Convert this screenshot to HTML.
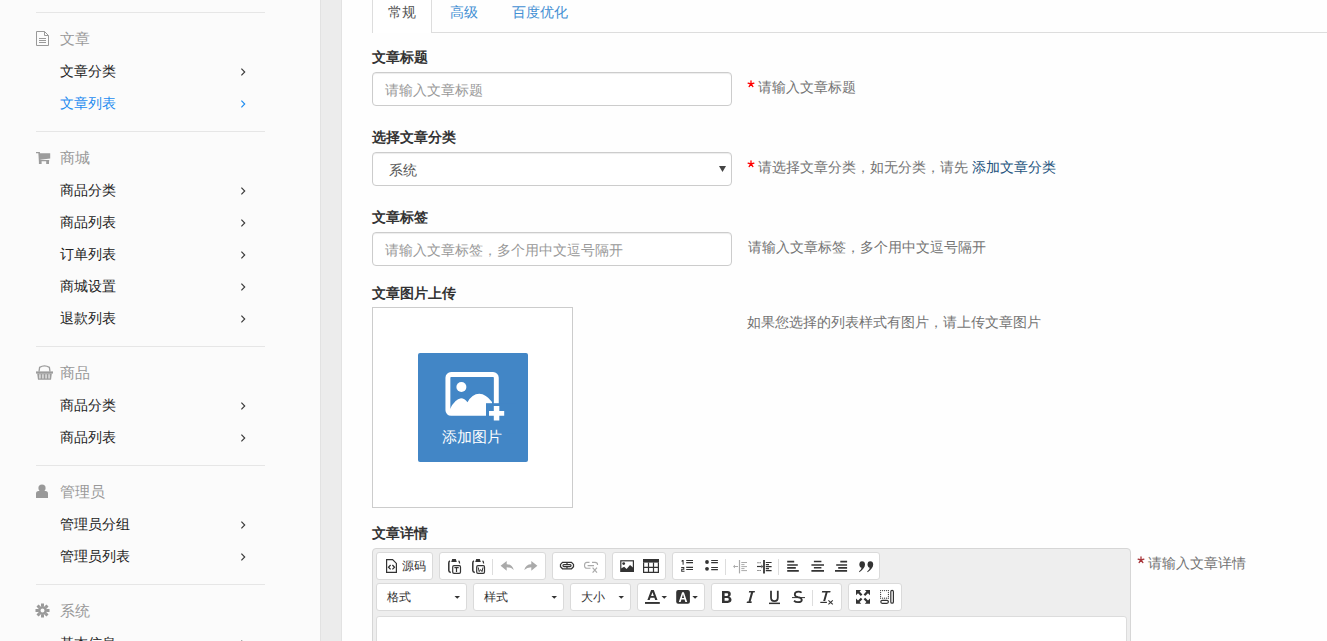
<!DOCTYPE html>
<html><head><meta charset="utf-8">
<style>
html,body{margin:0;padding:0;}
body{width:1327px;height:641px;overflow:hidden;position:relative;background:#fdfdfd;font-family:"Liberation Sans",sans-serif;color:#333;}
.a{position:absolute;white-space:nowrap;}
#side{position:absolute;left:0;top:0;width:320px;height:641px;background:#fbfbfb;}
#strip{position:absolute;left:320px;top:0;width:22px;height:641px;background:#ececec;}
#strip:before{content:"";position:absolute;left:0;top:0;width:1px;height:641px;background:#e2e2e2;}
#strip:after{content:"";position:absolute;right:0;top:0;width:1px;height:641px;background:#e2e2e2;}
.sl{position:absolute;left:36px;width:229px;height:1px;background:#e6e6e6;}
.sh{position:absolute;left:60px;font-size:15px;line-height:20px;color:#999;white-space:nowrap;}
.si{position:absolute;left:60px;font-size:14px;line-height:20px;color:#222;white-space:nowrap;}
.si.act{color:#1e8cf0;}
.ic{position:absolute;}
#content{position:absolute;left:342px;top:0;width:985px;height:641px;background:#fefefe;}
.lbl{position:absolute;left:372px;font-size:14px;line-height:20px;font-weight:bold;color:#333;white-space:nowrap;}
.inp{position:absolute;left:372px;width:358px;height:32px;border:1px solid #ccc;border-radius:4px;background:#fff;box-shadow:inset 0 1px 1px rgba(0,0,0,.075);}
.ph{position:absolute;font-size:14px;line-height:20px;color:#999;white-space:nowrap;}
.help{position:absolute;font-size:14px;line-height:20px;color:#737373;white-space:nowrap;}
.star{color:#f00;}
.tg{position:absolute;height:26px;border:1px solid #dadada;border-radius:3px;background:#fff;}

</style></head><body>
<div id="side">

  <div class="sl" style="top:12px"></div>
  <svg class="ic" style="left:36px;top:31px" width="13" height="15" viewBox="0 0 13 15"><path d="M0.5 0.5H8.5L12.5 4.5V14.5H0.5Z" fill="none" stroke="#999"/><path d="M8.5 0.5V4.5H12.5" fill="none" stroke="#999"/><path d="M3 7.5H10M3 9.5H10M3 11.5H10" stroke="#999"/></svg>
  <div class="sh" style="top:29px">文章</div>
  <div class="si" style="top:61px">文章分类</div>
  <div class="si act" style="top:93px">文章列表</div>
  <div class="sl" style="top:131px"></div>
  <svg class="ic" style="left:0;top:140px" width="60" height="30" viewBox="0 140 60 30"><path d="M36 152.1H39.6V153.3H36Z M38.3 152.1H39.9L40.5 162H38.9Z M39.6 153.3H50.2V158.4L40.2 159.7Z M39.6 160.1H49.2V161.3H39.6Z M38.9 161.2H41.6V164H38.9Z M46.2 161.2H49V164H46.2Z" fill="#9c9c9c"/></svg>
  <div class="sh" style="top:148px">商城</div>
  <div class="si" style="top:180px">商品分类</div>
  <div class="si" style="top:212px">商品列表</div>
  <div class="si" style="top:244px">订单列表</div>
  <div class="si" style="top:276px">商城设置</div>
  <div class="si" style="top:308px">退款列表</div>
  <div class="sl" style="top:346px"></div>
  <svg class="ic" style="left:36px;top:365px" width="17" height="15" viewBox="0 0 17 15"><path d="M3 6.6L3.6 2.4Q8.5 -0.6 13.4 2.4L14 6.6" fill="none" stroke="#9c9c9c" stroke-width="1.3"/><path d="M0 6.4H17V8.6H0Z" fill="#9c9c9c"/><path d="M1.2 8.6H15.8L15 14.8H2Z" fill="#9c9c9c"/><path d="M3.4 9.3H4.5V13.6H3.4Z M6.4 9.3H7.5V13.6H6.4Z M9.5 9.3H10.6V13.6H9.5Z M12.5 9.3H13.6V13.6H12.5Z" fill="#fbfbfb"/></svg>
  <div class="sh" style="top:363px">商品</div>
  <div class="si" style="top:395px">商品分类</div>
  <div class="si" style="top:427px">商品列表</div>
  <div class="sl" style="top:465px"></div>
  <svg class="ic" style="left:36px;top:484px" width="13" height="14" viewBox="0 0 13 14"><circle cx="6" cy="4" r="3.6" fill="#999"/><path d="M0 14V9.5Q0 7 2.5 7H9.5Q12 7 12 9.5V14Z" fill="#999"/></svg>
  <div class="sh" style="top:482px">管理员</div>
  <div class="si" style="top:514px">管理员分组</div>
  <div class="si" style="top:546px">管理员列表</div>
  <div class="sl" style="top:584px"></div>
  <svg class="ic" style="left:35px;top:603px" width="15" height="15" viewBox="0 0 15 15"><g fill="#999"><path d="M6 0.5H9V3H6Z M6 12H9V14.5H6Z M0.5 6H3V9H0.5Z M12 6H14.5V9H12Z"/><path d="M6 0.5H9V3H6Z" transform="rotate(45 7.5 7.5)"/><path d="M6 0.5H9V3H6Z" transform="rotate(135 7.5 7.5)"/><path d="M6 0.5H9V3H6Z" transform="rotate(225 7.5 7.5)"/><path d="M6 0.5H9V3H6Z" transform="rotate(315 7.5 7.5)"/></g><circle cx="7.5" cy="7.5" r="3.3" fill="none" stroke="#999" stroke-width="2.6"/></svg>
  <div class="sh" style="top:601px">系统</div>
  <div class="si" style="top:633px">基本信息</div>

<svg class="a" style="left:238px;top:66.4px" width="10" height="12" viewBox="238 66.4 10 12"><path d="M241.4 69.10000000000001L244.7 72.4L241.4 75.7" fill="none" stroke="#3a3a3a" stroke-width="1.15"/></svg><svg class="a" style="left:238px;top:98.4px" width="10" height="12" viewBox="238 98.4 10 12"><path d="M241.4 101.10000000000001L244.7 104.4L241.4 107.7" fill="none" stroke="#1e8cf0" stroke-width="1.15"/></svg><svg class="a" style="left:238px;top:185.4px" width="10" height="12" viewBox="238 185.4 10 12"><path d="M241.4 188.1L244.7 191.4L241.4 194.70000000000002" fill="none" stroke="#3a3a3a" stroke-width="1.15"/></svg><svg class="a" style="left:238px;top:217.4px" width="10" height="12" viewBox="238 217.4 10 12"><path d="M241.4 220.1L244.7 223.4L241.4 226.70000000000002" fill="none" stroke="#3a3a3a" stroke-width="1.15"/></svg><svg class="a" style="left:238px;top:249.4px" width="10" height="12" viewBox="238 249.4 10 12"><path d="M241.4 252.1L244.7 255.4L241.4 258.7" fill="none" stroke="#3a3a3a" stroke-width="1.15"/></svg><svg class="a" style="left:238px;top:281.4px" width="10" height="12" viewBox="238 281.4 10 12"><path d="M241.4 284.09999999999997L244.7 287.4L241.4 290.7" fill="none" stroke="#3a3a3a" stroke-width="1.15"/></svg><svg class="a" style="left:238px;top:313.4px" width="10" height="12" viewBox="238 313.4 10 12"><path d="M241.4 316.09999999999997L244.7 319.4L241.4 322.7" fill="none" stroke="#3a3a3a" stroke-width="1.15"/></svg><svg class="a" style="left:238px;top:400.4px" width="10" height="12" viewBox="238 400.4 10 12"><path d="M241.4 403.09999999999997L244.7 406.4L241.4 409.7" fill="none" stroke="#3a3a3a" stroke-width="1.15"/></svg><svg class="a" style="left:238px;top:432.4px" width="10" height="12" viewBox="238 432.4 10 12"><path d="M241.4 435.09999999999997L244.7 438.4L241.4 441.7" fill="none" stroke="#3a3a3a" stroke-width="1.15"/></svg><svg class="a" style="left:238px;top:519.4px" width="10" height="12" viewBox="238 519.4 10 12"><path d="M241.4 522.1L244.7 525.4L241.4 528.6999999999999" fill="none" stroke="#3a3a3a" stroke-width="1.15"/></svg><svg class="a" style="left:238px;top:551.4px" width="10" height="12" viewBox="238 551.4 10 12"><path d="M241.4 554.1L244.7 557.4L241.4 560.6999999999999" fill="none" stroke="#3a3a3a" stroke-width="1.15"/></svg><svg class="a" style="left:238px;top:638.4px" width="10" height="12" viewBox="238 638.4 10 12"><path d="M241.4 641.1L244.7 644.4L241.4 647.6999999999999" fill="none" stroke="#3a3a3a" stroke-width="1.15"/></svg>
</div>
<div id="strip"></div>
<div id="content"></div>
<!-- tabs -->
<div class="a" style="left:372px;top:-10px;width:58px;height:42px;border:1px solid #ddd;border-bottom:0;border-radius:4px 4px 0 0;background:#fff;"></div>
<div class="a" style="left:431px;top:32px;width:896px;height:1px;background:#ddd;"></div>
<div class="a" style="left:388px;top:2px;font-size:14px;line-height:20px;color:#555;">常规</div>
<div class="a" style="left:450px;top:2px;font-size:14px;line-height:20px;color:#428fd3;">高级</div>
<div class="a" style="left:512px;top:2px;font-size:14px;line-height:20px;color:#428fd3;">百度优化</div>
<!-- group1 -->
<div class="lbl" style="top:47px">文章标题</div>
<div class="inp" style="top:72px"></div>
<div class="ph" style="left:385px;top:80px">请输入文章标题</div>
<svg class="a" style="left:745.6px;top:79.2px" width="10" height="10" viewBox="745.6 79.2 10 10"><path d="M750.6 84.2V81.0M750.6 84.2L747.7 83.4M750.6 84.2L753.5 83.4M750.6 84.2L748.7 86.8M750.6 84.2L752.5 86.8" stroke="#f00" stroke-width="1.3" stroke-linecap="round" fill="none"/></svg><div class="help" style="left:758px;top:77px">请输入文章标题</div>
<!-- group2 -->
<div class="lbl" style="top:127px">选择文章分类</div>
<div class="inp" style="top:152px"></div>
<div class="a" style="left:389px;top:160px;font-size:14px;line-height:20px;color:#555;">系统</div>
<svg class="a" style="left:719px;top:166px" width="7" height="6" viewBox="0 0 7 6"><path d="M0 0H7L3.5 6Z" fill="#444"/></svg>
<svg class="a" style="left:745.6px;top:159.2px" width="10" height="10" viewBox="745.6 159.2 10 10"><path d="M750.6 164.2V161.0M750.6 164.2L747.7 163.39999999999998M750.6 164.2L753.5 163.39999999999998M750.6 164.2L748.7 166.79999999999998M750.6 164.2L752.5 166.79999999999998" stroke="#f00" stroke-width="1.3" stroke-linecap="round" fill="none"/></svg><div class="help" style="left:758px;top:157px">请选择文章分类，如无分类，请先 <span style="color:#23527c">添加文章分类</span></div>
<!-- group3 -->
<div class="lbl" style="top:207px">文章标签</div>
<div class="inp" style="top:232px"></div>
<div class="ph" style="left:385px;top:240px">请输入文章标签，多个用中文逗号隔开</div>
<div class="help" style="left:748px;top:237px">请输入文章标签，多个用中文逗号隔开</div>
<!-- group4 -->
<div class="lbl" style="top:283px">文章图片上传</div>
<div class="a" style="left:372px;top:307px;width:199px;height:199px;border:1px solid #ccc;background:#fff;"></div>
<div class="a" style="left:418px;top:353px;width:110px;height:109px;background:#4286c6;border-radius:2px;"></div>
<svg class="a" style="left:418px;top:353px" width="110" height="109" viewBox="418 353 110 109">
  <rect x="447.9" y="374.5" width="48.4" height="38.9" rx="3.2" fill="none" stroke="#fff" stroke-width="4.9"/>
  <circle cx="461.4" cy="387" r="5" fill="#fff"/>
  <path d="M450 409Q455 399 461 398.3Q464.5 398.5 467.5 402.3Q472 394 479.3 393.8Q486 394 492 402V413H450Z" fill="#fff"/>
  <rect x="486" y="403.2" width="30" height="30" fill="#4286c6"/>
  <path d="M493.8 406H499.3V411H504.2V415.8H499.3V420.6H493.8V415.8H489V411H493.8Z" fill="#fff"/>
</svg>
<div class="a" style="left:442px;top:427px;font-size:15px;line-height:20px;color:#fff;">添加图片</div>
<div class="help" style="left:747px;top:312px">如果您选择的列表样式有图片，请上传文章图片</div>
<!-- group5 -->
<div class="lbl" style="top:523px">文章详情</div>
<svg class="a" style="left:1136px;top:555.2px" width="10" height="10" viewBox="1136 555.2 10 10"><path d="M1141 560.2V557.0M1141 560.2L1138.1 559.4000000000001M1141 560.2L1143.9 559.4000000000001M1141 560.2L1139.1 562.8000000000001M1141 560.2L1142.9 562.8000000000001" stroke="#a8353a" stroke-width="1.3" stroke-linecap="round" fill="none"/></svg><div class="help" style="left:1148px;top:553px">请输入文章详情</div>

<div class="a" style="left:372px;top:548px;width:757px;height:110px;border:1px solid #d6d6d6;border-radius:4px;background:#eeeeee;"></div>
<div class="a" style="left:376px;top:616px;width:749px;height:40px;border:1px solid #dcdcdc;border-radius:3px 3px 0 0;background:#fff;"></div>
<!-- row1 groups -->
<div class="tg" style="left:376px;top:552px;width:55px;"></div>
<div class="tg" style="left:439px;top:552px;width:105px;"></div>
<div class="tg" style="left:552px;top:552px;width:52px;"></div>
<div class="tg" style="left:612px;top:552px;width:52px;"></div>
<div class="tg" style="left:672px;top:552px;width:206px;"></div>
<!-- row2 -->
<div class="tg" style="left:376px;top:583px;width:89px;"></div>
<div class="tg" style="left:473px;top:583px;width:89px;"></div>
<div class="tg" style="left:570px;top:583px;width:59px;"></div>
<div class="tg" style="left:637px;top:583px;width:66px;"></div>
<div class="tg" style="left:711px;top:583px;width:129px;"></div>
<div class="tg" style="left:848px;top:583px;width:52px;"></div>
<div class="a" style="left:402px;top:558px;font-size:12px;line-height:16px;color:#333;">源码</div>
<div class="a" style="left:387px;top:589px;font-size:12px;line-height:16px;color:#333;">格式</div>
<div class="a" style="left:484px;top:589px;font-size:12px;line-height:16px;color:#333;">样式</div>
<div class="a" style="left:581px;top:589px;font-size:12px;line-height:16px;color:#333;">大小</div>
<svg class="a" style="left:0;top:0" width="1327" height="641" viewBox="0 0 1327 641">
 <g fill="none" stroke="#333" stroke-width="1.2">
  <!-- source doc -->
  <path d="M386.6 559.6H392.6L396.4 563.4V572.4H386.6Z"/>
  <path d="M390.6 565L388.5 567.2L390.6 569.4M392.4 565L394.5 567.2L392.4 569.4" stroke-width="1.3"/>
  <!-- paste text -->
  <path d="M450 560.8Q448.8 561.4 448.8 563V570.6Q448.8 572.2 450.8 572.6" stroke-width="1.5"/>
  <path d="M458.6 560.8Q459.6 561.6 459.6 563.6"/>
  <rect x="452.7" y="565.6" width="7.8" height="7.8" rx="1.3"/>
  <path d="M454.4 567.6H458.7M456.5 567.6V572"/>
  <!-- paste word -->
  <path d="M474 560.8Q472.8 561.4 472.8 563V570.6Q472.8 572.2 474.8 572.6" stroke-width="1.5"/>
  <path d="M482.6 560.8Q483.6 561.6 483.6 563.6"/>
  <rect x="476.7" y="565.6" width="7.8" height="7.8" rx="1.3"/>
  <path d="M478.2 567.4L479.2 571.6L480.6 569.6L482 571.6L483 567.4" stroke-width="1"/>
  <!-- link -->
  <path d="M562.5 562.4H571.5L573.5 564.4V566.8L571.5 568.8H562.5L560.5 566.8V564.4Z" stroke-width="1.25"/>
  <rect x="562.9" y="564.6" width="8.2" height="2" rx="1" stroke-width="1.1"/>
  <path d="M567 562.6V564.2M567 567V568.6" stroke-width="1.2"/>
  <!-- image -->
  <rect x="620.8" y="560.8" width="12.6" height="10.6"/>
  <!-- table -->
  <path d="M643.6 562.4V572.3H658.4V562.4M648.5 562.4V572.3M653.5 562.4V572.3M643.6 567.3H658.4"/>
  <!-- lists -->
  <path d="M686.2 560.5H693M686.2 562.6H693M686.2 567.4H693M686.2 569.5H693" stroke-width="1.15"/>
  <path d="M711.2 560.5H717.9M711.2 562.6H717.9M711.2 567.5H717.9M711.2 569.6H717.9" stroke-width="1.15"/>
  <!-- indent -->
  <path d="M764 560V573.4" stroke-width="1.8"/>
  <path d="M765.8 562.5H771.6M765.8 564.6H769M765.8 566.6H771.6M765.8 568.6H769M765.8 570.6H771.6" stroke-width="1.1"/>
  <path d="M757 566.5H761.5" stroke-width="1.2"/>
  <!-- align -->
  <path d="M787.2 561.6H794.2M787.2 565H797.8M787.2 567.9H795.8M787.2 570.9H798.8" stroke-width="1.6"/>
  <path d="M813.9 561.5H821.4M811.4 565H824M813.9 567.8H821.4M811.4 570.9H824" stroke-width="1.6"/>
  <path d="M840.3 561.6H847.1M836.2 565H847.1M838.2 567.9H847.1M835 570.9H847.1" stroke-width="1.6"/>
  <!-- showblocks -->
  <rect x="880.8" y="600.3" width="7.6" height="3" rx="1.5"/>
  <rect x="890.8" y="590.4" width="2.6" height="12.8" rx="1.3"/>
 </g>
 <g fill="#333">
  <path d="M761.5 564.6L763 566.5L761.5 568.4Z"/>
  <path d="M757.5 562.3h1v0.9h-1zM759.6 562.3h1v0.9h-1zM757.5 570.1h1v0.9h-1zM759.6 570.1h1v0.9h-1z"/>
  <circle cx="623.7" cy="563.6" r="1.4"/>
  <path d="M451.2 562L452.2 558.9H455.8L456.8 562Z"/>
  <path d="M475.2 562L476.2 558.9H479.8L480.8 562Z"/>
  <path d="M621 571V568.6L624.2 566.8L626.6 569L630 565L633 567.4V571Z"/>
  <rect x="643" y="559" width="16" height="3.6"/>
  <path d="M681.8 560H683.6V564.8H682.6V561.5L681.6 561.9Z M681.2 567H684.3V569.7H682.2V570.8H684.5V571.8H681.2V568.8H683.3V568H681.2Z"/>
  <circle cx="707" cy="562" r="1.9"/><circle cx="707" cy="568.8" r="1.9"/>
  <!-- blockquote -->
  <path d="M862 561.2Q865 561.2 865 564.6Q865 568.5 859.4 572.2L859 571.6Q861.5 569.6 861.6 567.8Q859.5 567.6 859.3 564.6Q859.4 561.2 862 561.2Z"/>
  <path d="M870.2 561.2Q873.2 561.2 873.2 564.6Q873.2 568.5 867.6 572.2L867.2 571.6Q869.7 569.6 869.8 567.8Q867.7 567.6 867.5 564.6Q867.6 561.2 870.2 561.2Z"/>
  <!-- font color -->
  <path d="M651.1 590H653.8L657.5 600H655.2L654.4 597.7H650.5L649.7 600H647.4Z M651.1 595.9H653.8L652.45 592.3Z" fill-rule="evenodd"/>
  <rect x="645" y="602" width="14.8" height="1.9"/>
  <path d="M661.5 596H667L664.25 598.8Z"/>
  <rect x="676.2" y="590.1" width="13.7" height="13.7" rx="2"/>
  <path d="M692.3 596H697.9L695.1 598.8Z"/>
  <!-- B -->
  <path d="M722 591.1H727.4Q730.8 591.1 730.8 594Q730.8 596 729.2 596.7Q731.5 597.4 731.5 599.6Q731.5 602.9 727.8 602.9H722Z M724.6 593.2V595.9H727Q728.2 595.9 728.2 594.5Q728.2 593.2 727 593.2Z M724.6 597.9V600.8H727.3Q728.8 600.8 728.8 599.3Q728.8 597.9 727.3 597.9Z" fill-rule="evenodd"/>
  <!-- I -->
  <path d="M749.2 591H755L754.6 592.4H753.2L750.6 601.5H751.9L751.5 603H746.6L747 601.5H748.5L751 592.4H748.8Z"/>
  <!-- U underline -->
  <rect x="769" y="602.6" width="11" height="1.5"/>
  <!-- Tx -->
  <path d="M822.2 591H830.6L830.2 592.6H827.6L825.2 601H823.2L825.6 592.6H821.8Z"/>
  <rect x="820.3" y="601.8" width="6.6" height="1.2"/>
  <!-- maximize -->
  <path d="M856 590H861.2L859.6 591.6L862.4 594.4L860.8 596L858 593.2L856 595.2Z"/>
  <path d="M870 590H864.8L866.4 591.6L863.6 594.4L865.2 596L868 593.2L870 595.2Z"/>
  <path d="M856 603.7H861.2L859.6 602.1L862.4 599.3L860.8 597.7L858 600.5L856 598.5Z"/>
  <path d="M870 603.7H864.8L866.4 602.1L863.6 599.3L865.2 597.7L868 600.5L870 598.5Z"/>
  <!-- dots -->
  <g>
   <circle cx="880.6" cy="590.6" r="0.6"/><circle cx="882.6" cy="590.6" r="0.6"/><circle cx="884.6" cy="590.6" r="0.6"/><circle cx="886.6" cy="590.6" r="0.6"/><circle cx="888.4" cy="590.6" r="0.6"/>
   <circle cx="880.6" cy="598.2" r="0.6"/><circle cx="882.6" cy="598.2" r="0.6"/><circle cx="884.6" cy="598.2" r="0.6"/><circle cx="886.6" cy="598.2" r="0.6"/><circle cx="888.4" cy="598.2" r="0.6"/>
   <circle cx="880.6" cy="592.5" r="0.6"/><circle cx="880.6" cy="594.4" r="0.6"/><circle cx="880.6" cy="596.3" r="0.6"/>
   <circle cx="888.4" cy="592.5" r="0.6"/><circle cx="888.4" cy="594.4" r="0.6"/><circle cx="888.4" cy="596.3" r="0.6"/>
  </g>
  <!-- combo arrows -->
  <path d="M454.5 596H460L457.25 598.8Z"/>
  <path d="M551.5 596H557L554.25 598.8Z"/>
  <path d="M618.5 596H624L621.25 598.8Z"/>
 </g>
 <g fill="none" stroke="#333">
  <!-- U -->
  <path d="M771 590.7V597.6Q771 601.2 774.4 601.2Q777.8 601.2 777.8 597.6V590.7" stroke-width="1.8"/>
  <!-- S -->
  <path d="M801.6 592.6Q800.4 591.6 798.4 591.6Q794.8 591.6 794.8 594.4Q794.8 596.4 798 597.2Q801.8 598 801.8 600Q801.8 602.2 798 602.2Q795.6 602.2 794 600.8" stroke-width="1.8"/>
  <path d="M792 597.6H805" stroke-width="1"/>
  <!-- x of Tx -->
  <path d="M828.4 600.4L832.8 604.4M832.8 600.4L828.4 604.4" stroke-width="1.1"/>
 </g>
 <g fill="#fff">
  <path d="M682.1 592.3H683.9L687.2 602H685.3L684.6 599.6H681.4L680.7 602H678.8Z M681.9 597.9H684.1L683 594.3Z"/>
 </g>
 <!-- disabled grey -->
 <g fill="#aaa">
  <path d="M500.6 565.8L506.7 561V564.2Q512.2 564.2 513.8 570Q511 567.3 506.7 567.3V570.7Z"/>
  <path d="M537.4 565.8L531.3 561V564.2Q525.8 564.2 524.2 570Q527 567.3 531.3 567.3V570.7Z"/>
 </g>
 <g fill="none" stroke="#aaa" stroke-width="1.1">
  <path d="M589.5 562.4H587Q584.5 562.4 584.5 565.4Q584.5 568.3 587 568.3H590.5M592 562.4H595Q597.6 562.4 597.6 565M594 565.6H587.6"/>
  <path d="M592.6 567.6L597 572.6M597 567.6L592.6 572.6" stroke-width="1.2"/>
  <path d="M739.5 560V573.4" stroke-width="1.2"/>
  <path d="M741.3 562.5H747M741.3 564.6H744.5M741.3 566.6H747M741.3 568.6H744.5M741.3 570.6H747" stroke-width="1"/>
  <path d="M734.5 566.5H738" stroke-width="1"/>
 </g>
 <g fill="#aaa"><path d="M733 566.5L735 564.8V568.2Z"/></g>
 <!-- separators -->
 <g fill="#ddd">
  <rect x="492" y="559" width="1" height="16"/>
  <rect x="725" y="559" width="1" height="16"/>
  <rect x="778" y="559" width="1" height="16"/>
  <rect x="812" y="590" width="1" height="16"/>
 </g>
</svg>

</body></html>
